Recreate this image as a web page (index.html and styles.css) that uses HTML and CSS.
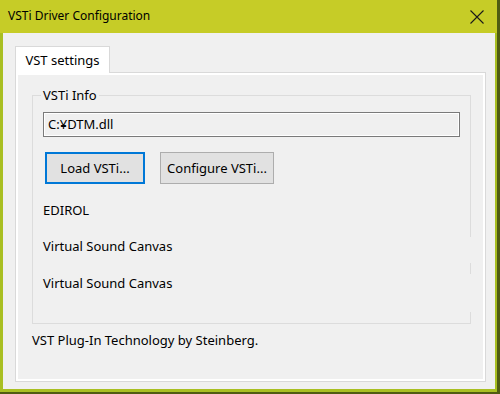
FILE: index.html
```html
<!DOCTYPE html>
<html lang="en">
<head>
    <meta charset="UTF-8">
    <meta name="viewport" content="width=device-width, initial-scale=1.0">
    <title>VSTi Driver Configuration</title>
    <link rel="stylesheet" href="styles.css">
</head>
<body>

    <div class="window">
        <!-- Title bar -->
        <div class="titlebar">
            <span class="title">VSTi Driver Configuration</span>
            <svg class="close" width="14" height="14" viewBox="0 0 14 14">
                <path d="M0.5 0.5 L13.5 13.5 M13.5 0.5 L0.5 13.5" stroke="#1a1a1a" stroke-width="1.1" fill="none"/>
            </svg>
        </div>

        <div class="client">
            <div class="tabs">
                <div class="tab-strip">
                    <div class="tab active">VST settings</div>
                </div>
                <div class="tab-panel">
                    <div class="tab-page">
                        <fieldset class="group">
                            <legend>VSTi Info</legend>
                            <div class="path-box">C:¥DTM.dll</div>
                            <div class="button-row">
                                <button class="button focused">Load VSTi...</button>
                                <button class="button">Configure VSTi...</button>
                            </div>
                            <div class="info-label first">EDIROL</div>
                            <div class="info-label wide second">Virtual Sound Canvas</div>
                            <div class="info-label wide third">Virtual Sound Canvas</div>
                        </fieldset>
                        <div class="footer-text">VST Plug-In Technology by Steinberg.</div>
                    </div>
                </div>
            </div>
        </div>
    </div>

</body>
</html>
```

FILE: styles.css
```css
body {
    margin: 0;
    background-color: #4f5c12;
    font-family: "Noto Sans", "Liberation Sans", sans-serif;
    font-size: 13px;
    color: #000;
}
.window {
    width: 497px;
    height: 392px;
    box-sizing: border-box;
    background-color: #a9bf22;
    padding: 0 2px 3px 3px;
    display: flex;
    flex-direction: column;
}
.titlebar {
    height: 33px;
    margin: 0 -2px 0 -3px;
    padding: 0 13px 0 8px;
    background-color: #c6cc27;
    display: flex;
    align-items: center;
    justify-content: space-between;
}
.title {
    font-size: 12px;
    line-height: 18px;
    margin-top: -1px;
}
.close {
    display: block;
}
.client {
    flex: 1;
    background-color: #f0f0f0;
    padding: 13px 9px 7px 12px;
}
.tabs {
    display: flex;
    flex-direction: column;
    height: 100%;
}
.tab-strip {
    display: flex;
}
.tab {
    position: relative;
    z-index: 1;
    height: 27px;
    width: 95px;
    box-sizing: border-box;
    border: 1px solid #d9d9d9;
    border-bottom: none;
    background-color: #fff;
    margin-bottom: -1px;
    text-align: center;
    line-height: 26px;
}
.tab-panel {
    flex: 1;
    border: 1px solid #d9d9d9;
    background-color: #fff;
    padding: 2px;
}
.tab-page {
    height: 100%;
    box-sizing: border-box;
    background-color: #f0f0f0;
    padding: 12px 0 0 14px;
}
.group {
    width: 439px;
    box-sizing: border-box;
    margin: 0;
    border: 1px solid #dcdcdc;
    padding: 9px 10px 11px 10px;
}
.group legend {
    padding: 0 2px;
    margin-left: -2px;
    line-height: 16px;
}
.path-box {
    height: 25px;
    box-sizing: border-box;
    border: 1px solid #7a7a7a;
    box-shadow: inset 0 0 0 1px #fff;
    padding-left: 4px;
    line-height: 23px;
}
.button-row {
    display: flex;
    gap: 15px;
    margin-top: 15px;
    margin-left: 2px;
}
.button {
    height: 32px;
    box-sizing: border-box;
    padding: 0;
    font-family: inherit;
    font-size: 13px;
    color: #000;
    background-color: #e1e1e1;
    border: 1px solid #adadad;
}
.button.focused {
    width: 100px;
    border: 2px solid #0078d7;
}
.button + .button {
    width: 114px;
}
.info-label {
    line-height: 16px;
    box-sizing: border-box;
    padding-top: 1px;
    background-color: #f0f0f0;
}
.info-label.first {
    margin-top: 17px;
    height: 26px;
}
.info-label.wide {
    margin-right: -13px;
}
.info-label.second {
    margin-top: 10px;
    height: 26px;
}
.info-label.third {
    margin-top: 11px;
    height: 38px;
}
.footer-text {
    margin-top: 8px;
    line-height: 16px;
}
```
